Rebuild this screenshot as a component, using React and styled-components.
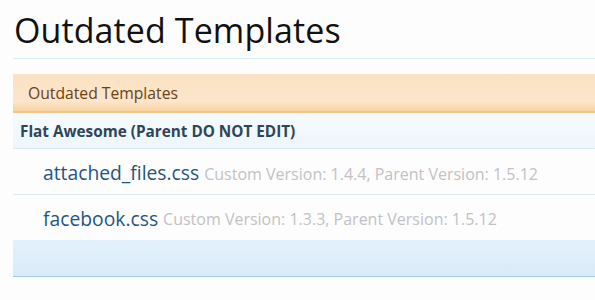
import React from "react";
import styled, { createGlobalStyle } from "styled-components";

const Global = createGlobalStyle`
  html, body { margin: 0; padding: 0; background: #fdfdfe; }
  body { font-family: "Open Sans", "Liberation Sans", sans-serif; }
`;

const Page = styled.div`
  padding: 0 0 0 13px;
  width: 600px;
`;

const Title = styled.h1`
  margin: 0;
  padding: 10px 0 0 1px;
  height: 59px;
  box-sizing: border-box;
  font-size: 34px;
  font-weight: 400;
  color: #111;
  line-height: 40px;
  letter-spacing: 0.1px;
  border-bottom: 1px solid #d7ebf8;
`;

const Panel = styled.div`
  margin-top: 15px;
`;

const Header = styled.div`
  height: 39px;
  box-sizing: border-box;
  display: flex;
  align-items: center;
  padding: 1px 0 0 15px;
  background: linear-gradient(#fbe2c3, #fce5cb 75%, #f9d6a6 95%);
  border-bottom: 2px solid #eec68d;
  font-size: 15.7px;
  color: #6a4213;
`;

const Group = styled.div`
  height: 36px;
  box-sizing: border-box;
  display: flex;
  align-items: center;
  padding-left: 7px;
  background: linear-gradient(#f6fafd, #eef6fc);
  border-bottom: 1px solid #d8ebf8;
  font-size: 15.3px;
  font-weight: 700;
  color: #2d4658;
`;

const Row = styled.div`
  height: ${(p) => (p.last ? 45 : 46)}px;
  box-sizing: border-box;
  display: flex;
  align-items: center;
  padding: 2px 0 0 30px;
  border-bottom: 1px solid ${(p) => (p.last ? "transparent" : "#dbeaf5")};
  white-space: nowrap;
`;

const Name = styled.a`
  font-size: 19.3px;
  color: #1f5580;
  text-decoration: none;
`;

const Meta = styled.span`
  margin-left: 5px;
  padding-top: 2px;
  font-size: 16px;
  color: #c2c2c2;
`;

const Footer = styled.div`
  height: 37px;
  box-sizing: border-box;
  background: linear-gradient(#e3f1fb, #d9ebf9);
  border-bottom: 1px solid #a9c9e1;
`;

const templates = [
  { name: "attached_files.css", custom: "1.4.4", parent: "1.5.12" },
  { name: "facebook.css", custom: "1.3.3", parent: "1.5.12" },
];

export default function App() {
  return (
    <Page>
      <Global />
      <Title>Outdated Templates</Title>
      <Panel>
        <Header>Outdated Templates</Header>
        <Group>Flat Awesome (Parent DO NOT EDIT)</Group>
        {templates.map((t, i) => (
          <Row key={t.name} last={i === templates.length - 1}>
            <Name href="#">{t.name}</Name>
            <Meta>
              Custom Version: {t.custom}, Parent Version: {t.parent}
            </Meta>
          </Row>
        ))}
        <Footer />
      </Panel>
    </Page>
  );
}
